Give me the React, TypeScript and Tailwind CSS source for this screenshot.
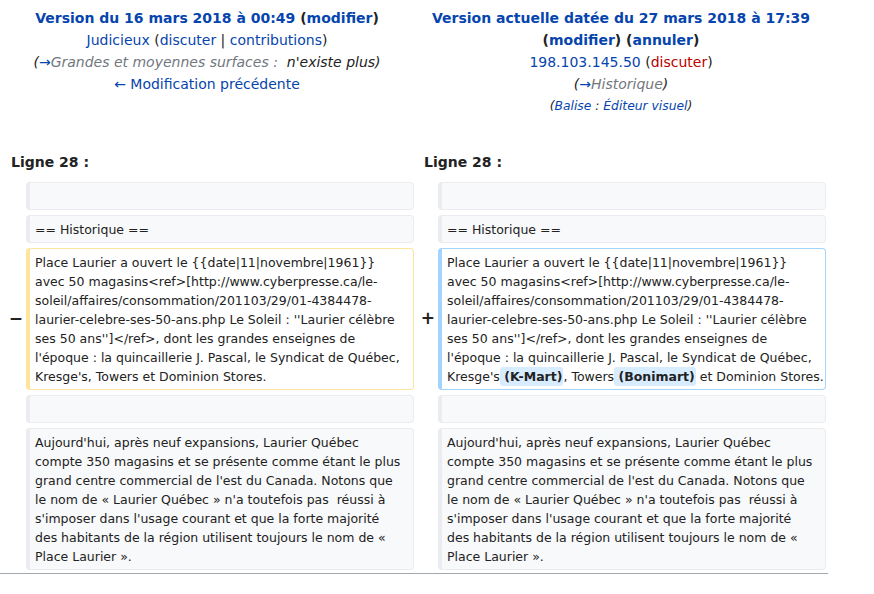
const link = "text-[#0645ad]";
const gray = "text-[#72777d]";

const ContextCell = ({ children }: { children?: React.ReactNode }) => (
  <div className="min-h-[28px] rounded-[4px] border border-l-4 border-[#eaecf0] bg-[#f8f9fa] py-[3.5px] pl-[5px] pr-[6px] text-[12.5px] leading-[19px] text-[#222]">
    {children}
  </div>
);

const ChangeCell = ({ side, children }: { side: "del" | "ins"; children: React.ReactNode }) => (
  <div
    className={
      side === "del"
        ? "rounded-[4px] border border-l-4 border-[#ffe49c] bg-white py-[3.5px] pl-[5px] pr-[6px] text-[12.5px] leading-[19px] text-[#222]"
        : "rounded-[4px] border border-l-4 border-[#a3d3ff] bg-white py-[3.5px] pl-[5px] pr-[6px] text-[12.5px] leading-[19px] text-[#222]"
    }
  >
    {children}
  </div>
);

const Marker = ({ sign }: { sign?: string }) => (
  <div className="flex items-center justify-end pr-[3px] text-[17px] font-bold text-[#222]">{sign}</div>
);

// inserted words, the leading space sits inside the highlight
const Ins = ({ children }: { children: React.ReactNode }) => (
  <span className="rounded-[3px] bg-[#d8ecff] pr-[1px] py-[2px] font-bold">{children}</span>
);

// lines as they wrap in the diff cells
const Lines = ({ lines }: { lines: React.ReactNode[] }) => (
  <>
    {lines.map((l, i) => (
      <div key={i} className="whitespace-pre">
        {l}
      </div>
    ))}
  </>
);

const firstLines = [
  "Place Laurier a ouvert le {{date|11|novembre|1961}}",
  "avec 50 magasins<ref>[http://www.cyberpresse.ca/le-",
  "soleil/affaires/consommation/201103/29/01-4384478-",
  "laurier-celebre-ses-50-ans.php Le Soleil : ''Laurier célèbre",
  "ses 50 ans'']</ref>, dont les grandes enseignes de",
  "l'époque : la quincaillerie J. Pascal, le Syndicat de Québec,",
];

const lastLines = [
  "Aujourd'hui, après neuf expansions, Laurier Québec",
  "compte 350 magasins et se présente comme étant le plus",
  "grand centre commercial de l'est du Canada. Notons que",
  "le nom de « Laurier Québec » n'a toutefois pas  réussi à",
  "s'imposer dans l'usage courant et que la forte majorité",
  "des habitants de la région utilisent toujours le nom de «",
  "Place Laurier ».",
];

export default function App() {
  return (
    <div className="h-[594px] w-[874px] overflow-hidden bg-white font-['DejaVu_Sans',sans-serif] text-[#222]">
      <div className="w-[828px]">
        {/* revision headers */}
        <div className="grid grid-cols-[414px_414px] pt-[7px] text-center text-[14px] leading-[22px]">
          <div>
            <div className="font-bold">
              <span className={link}>Version du 16 mars 2018 à 00:49</span> (<span className={link}>modifier</span>)
            </div>
            <div>
              <span className={link}>Judicieux</span> (<span className={link}>discuter</span> |{" "}
              <span className={link}>contributions</span>)
            </div>
            <div className="italic">
              (<span className={link}>→</span>
              <span className={gray}>Grandes et moyennes surfaces :</span>{"\u00a0 "}n'existe plus)
            </div>
            <div className={link}>← Modification précédente</div>
          </div>
          <div>
            <div className={"font-bold " + link}>Version actuelle datée du 27 mars 2018 à 17:39</div>
            <div className="font-bold">
              (<span className={link}>modifier</span>) (<span className={link}>annuler</span>)
            </div>
            <div>
              <span className={link}>198.103.145.50</span> (<span className="text-[#ba0000]">discuter</span>)
            </div>
            <div className="italic">
              (<span className={link}>→</span>
              <span className={gray}>Historique</span>)
            </div>
            <div className="text-[12.32px] italic">
              (<span className={link}>Balise</span> : <span className={link}>Éditeur visuel</span>)
            </div>
          </div>
        </div>

        <div className="mt-[34px] grid grid-cols-[414px_414px] text-[14px] font-bold leading-[22px]">
          <div className="pl-[11px]">Ligne 28 :</div>
          <div className="pl-[10px]">Ligne 28 :</div>
        </div>

        <div className="mt-[9px] grid grid-cols-[26px_388px_24px_388px] gap-y-[5px]">
          <Marker />
          <ContextCell />
          <Marker />
          <ContextCell />

          <Marker />
          <ContextCell>== Historique ==</ContextCell>
          <Marker />
          <ContextCell>== Historique ==</ContextCell>

          <Marker sign="−" />
          <ChangeCell side="del">
            <Lines lines={[...firstLines, "Kresge's, Towers et Dominion Stores."]} />
          </ChangeCell>
          <Marker sign="+" />
          <ChangeCell side="ins">
            <Lines
              lines={[
                ...firstLines,
                <>
                  Kresge's<Ins> (K-Mart)</Ins>, Towers<Ins> (Bonimart)</Ins> et Dominion Stores.
                </>,
              ]}
            />
          </ChangeCell>

          <Marker />
          <ContextCell />
          <Marker />
          <ContextCell />

          <Marker />
          <ContextCell>
            <Lines lines={lastLines} />
          </ContextCell>
          <Marker />
          <ContextCell>
            <Lines lines={lastLines} />
          </ContextCell>
        </div>

        <div className="mt-[3px] h-px bg-[#a2a9b1]" />
      </div>
    </div>
  );
}
